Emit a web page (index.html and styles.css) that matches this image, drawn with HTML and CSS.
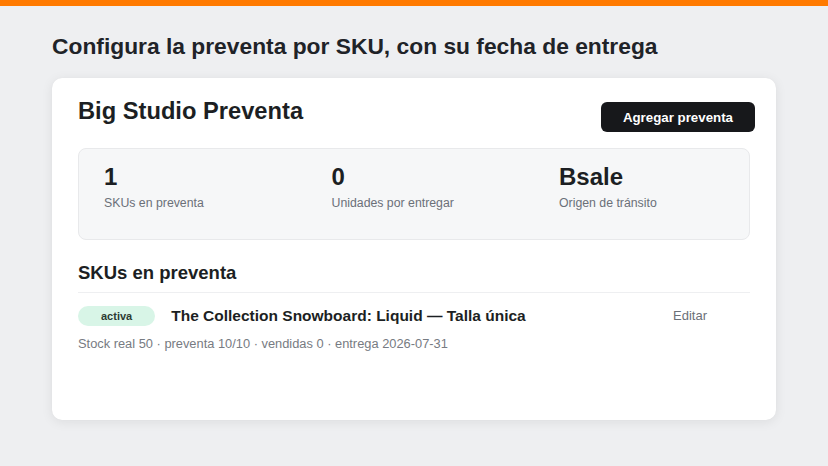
FILE: index.html
```html
<!DOCTYPE html>
<html lang="es">
<head>
<meta charset="utf-8">
<title>Big Studio Preventa</title>
<link rel="stylesheet" href="styles.css">
</head>
<body>
<div class="topbar"></div>
<main class="page">
  <h1 class="page-title">Configura la preventa por SKU, con su fecha de entrega</h1>
  <section class="card">
    <header class="card-head">
      <h2 class="card-title">Big Studio Preventa</h2>
      <button class="btn-primary" type="button">Agregar preventa</button>
    </header>
    <div class="stats">
      <div class="stat">
        <div class="stat-value">1</div>
        <div class="stat-label">SKUs en preventa</div>
      </div>
      <div class="stat">
        <div class="stat-value">0</div>
        <div class="stat-label">Unidades por entregar</div>
      </div>
      <div class="stat">
        <div class="stat-value">Bsale</div>
        <div class="stat-label">Origen de tránsito</div>
      </div>
    </div>
    <h3 class="section-title">SKUs en preventa</h3>
    <div class="item">
      <div class="item-row">
        <span class="badge">activa</span>
        <span class="item-title">The Collection Snowboard: Liquid — Talla única</span>
        <button class="btn-link" type="button">Editar</button>
      </div>
      <div class="item-meta">Stock real 50 · preventa 10/10 · vendidas 0 · entrega 2026-07-31</div>
    </div>
  </section>
</main>
</body>
</html>
```

FILE: styles.css
```css
* { box-sizing: border-box; }
html, body { margin: 0; padding: 0; }
body {
  background: #eeeff1;
  font-family: "Liberation Sans", Arial, sans-serif;
  color: #1c1f23;
  width: 828px;
  height: 466px;
  overflow: hidden;
}
.topbar {
  height: 6px;
  background: #ff7a00;
}
.page {
  padding: 26px 52px 0;
}
.page-title {
  margin: 0;
  font-size: 22.8px;
  line-height: 28px;
  font-weight: 700;
  color: #1f2328;
}
.card {
  margin-top: 18px;
  background: #ffffff;
  border-radius: 10px;
  box-shadow: 0 2px 12px rgba(20, 24, 30, 0.08), 0 0 1px rgba(20, 24, 30, 0.06);
  padding: 18px 26px 68px;
}
.card-head {
  display: flex;
  justify-content: space-between;
  align-items: flex-start;
}
.card-title {
  margin: 0;
  font-size: 23.7px;
  line-height: 30px;
  font-weight: 700;
}
.btn-primary {
  margin-top: 6px;
  margin-right: -5px;
  height: 30px;
  padding: 0 22px;
  border: 0;
  border-radius: 6px;
  background: #17181b;
  color: #ffffff;
  font-family: inherit;
  font-size: 13.3px;
  font-weight: 700;
}
.stats {
  margin-top: 16px;
  display: grid;
  grid-template-columns: repeat(3, 1fr);
  column-gap: 62.5px;
  padding: 14px 25px 28px;
  background: #f6f7f8;
  border: 1px solid #e8e9eb;
  border-radius: 8px;
}
.stat-value {
  font-size: 24px;
  line-height: 28px;
  font-weight: 700;
}
.stat-label {
  margin-top: 4px;
  font-size: 12.3px;
  line-height: 16px;
  color: #6b7078;
}
.section-title {
  margin: 22px 0 0;
  padding-bottom: 8px;
  font-size: 18.5px;
  line-height: 22px;
  font-weight: 700;
  border-bottom: 1px solid #eeeff1;
}
.item {
  padding-top: 11px;
}
.item-row {
  display: flex;
  align-items: center;
  gap: 16px;
}
.badge {
  height: 20px;
  line-height: 20px;
  padding: 0 23px;
  border-radius: 10px;
  background: #d8f5e7;
  color: #2c3b33;
  font-size: 11px;
  font-weight: 700;
}
.item-title {
  flex: 1;
  font-size: 15.5px;
  font-weight: 700;
}
.btn-link {
  margin-right: 31px;
  padding: 4px 12px;
  border: 0;
  background: transparent;
  color: #6b7078;
  font-family: inherit;
  font-size: 13px;
}
.item-meta {
  margin-top: 8.5px;
  font-size: 12.85px;
  line-height: 16px;
  color: #777b82;
}
```
